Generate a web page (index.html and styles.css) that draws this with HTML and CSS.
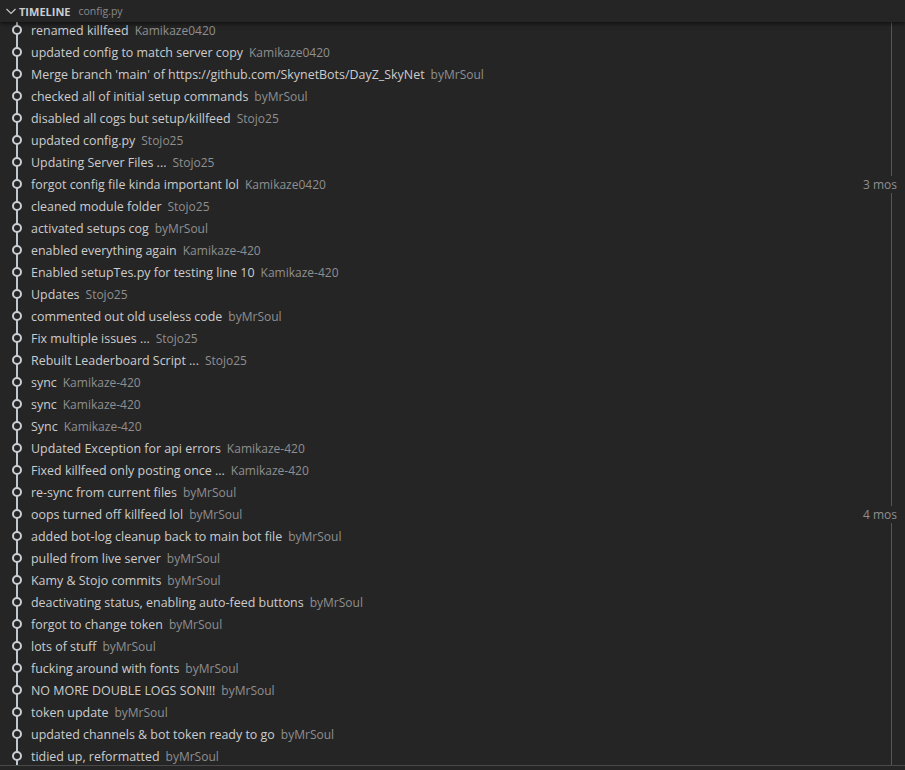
FILE: index.html
```html
<!DOCTYPE html>
<html>
<head>
<meta charset="utf-8">
<link rel="stylesheet" href="styles.css">
</head>
<body>
<div class="pane">
  <div class="header">
    <svg class="chev" width="16" height="16" viewBox="0 0 16 16"><path d="M3.5 6 L8 10.5 L12.5 6" fill="none" stroke="#c5c5c5" stroke-width="1.2"/></svg>
    <span class="title">TIMELINE</span>
    <span class="file">config.py</span>
  </div>
  <div class="viewport">
    <div class="vline"></div>
    <div class="list" id="list">
      <div class="row"><span class="ic"></span><span class="label">renamed killfeed</span><span class="desc">Kamikaze0420</span></div>
      <div class="row"><span class="ic"></span><span class="label">updated config to match server copy</span><span class="desc">Kamikaze0420</span></div>
      <div class="row"><span class="ic"></span><span class="label">Merge branch 'main' of https://github.com/SkynetBots/DayZ_SkyNet</span><span class="desc">byMrSoul</span></div>
      <div class="row"><span class="ic"></span><span class="label">checked all of initial setup commands</span><span class="desc">byMrSoul</span></div>
      <div class="row"><span class="ic"></span><span class="label">disabled all cogs but setup/killfeed</span><span class="desc">Stojo25</span></div>
      <div class="row"><span class="ic"></span><span class="label">updated config.py</span><span class="desc">Stojo25</span></div>
      <div class="row"><span class="ic"></span><span class="label">Updating Server Files ...</span><span class="desc">Stojo25</span></div>
      <div class="row"><span class="ic"></span><span class="label">forgot config file kinda important lol</span><span class="desc">Kamikaze0420</span><span class="time">3 mos</span></div>
      <div class="row"><span class="ic"></span><span class="label">cleaned module folder</span><span class="desc">Stojo25</span></div>
      <div class="row"><span class="ic"></span><span class="label">activated setups cog</span><span class="desc">byMrSoul</span></div>
      <div class="row"><span class="ic"></span><span class="label">enabled everything again</span><span class="desc">Kamikaze-420</span></div>
      <div class="row"><span class="ic"></span><span class="label">Enabled setupTes.py for testing line 10</span><span class="desc">Kamikaze-420</span></div>
      <div class="row"><span class="ic"></span><span class="label">Updates</span><span class="desc">Stojo25</span></div>
      <div class="row"><span class="ic"></span><span class="label">commented out old useless code</span><span class="desc">byMrSoul</span></div>
      <div class="row"><span class="ic"></span><span class="label">Fix multiple issues ...</span><span class="desc">Stojo25</span></div>
      <div class="row"><span class="ic"></span><span class="label">Rebuilt Leaderboard Script ...</span><span class="desc">Stojo25</span></div>
      <div class="row"><span class="ic"></span><span class="label">sync</span><span class="desc">Kamikaze-420</span></div>
      <div class="row"><span class="ic"></span><span class="label">sync</span><span class="desc">Kamikaze-420</span></div>
      <div class="row"><span class="ic"></span><span class="label">Sync</span><span class="desc">Kamikaze-420</span></div>
      <div class="row"><span class="ic"></span><span class="label">Updated Exception for api errors</span><span class="desc">Kamikaze-420</span></div>
      <div class="row"><span class="ic"></span><span class="label">Fixed killfeed only posting once ...</span><span class="desc">Kamikaze-420</span></div>
      <div class="row"><span class="ic"></span><span class="label">re-sync from current files</span><span class="desc">byMrSoul</span></div>
      <div class="row"><span class="ic"></span><span class="label">oops turned off killfeed lol</span><span class="desc">byMrSoul</span><span class="time">4 mos</span></div>
      <div class="row"><span class="ic"></span><span class="label">added bot-log cleanup back to main bot file</span><span class="desc">byMrSoul</span></div>
      <div class="row"><span class="ic"></span><span class="label">pulled from live server</span><span class="desc">byMrSoul</span></div>
      <div class="row"><span class="ic"></span><span class="label">Kamy &amp; Stojo commits</span><span class="desc">byMrSoul</span></div>
      <div class="row"><span class="ic"></span><span class="label">deactivating status, enabling auto-feed buttons</span><span class="desc">byMrSoul</span></div>
      <div class="row"><span class="ic"></span><span class="label">forgot to change token</span><span class="desc">byMrSoul</span></div>
      <div class="row"><span class="ic"></span><span class="label">lots of stuff</span><span class="desc">byMrSoul</span></div>
      <div class="row"><span class="ic"></span><span class="label">fucking around with fonts</span><span class="desc">byMrSoul</span></div>
      <div class="row"><span class="ic"></span><span class="label">NO MORE DOUBLE LOGS SON!!!</span><span class="desc">byMrSoul</span></div>
      <div class="row"><span class="ic"></span><span class="label">token update</span><span class="desc">byMrSoul</span></div>
      <div class="row"><span class="ic"></span><span class="label">updated channels &amp; bot token ready to go</span><span class="desc">byMrSoul</span></div>
      <div class="row"><span class="ic"></span><span class="label">tidied up, reformatted</span><span class="desc">byMrSoul</span></div>
    </div>
  </div>
</div>
</body>
</html>
```
FILE: styles.css
```css
html, body {
  margin: 0;
  padding: 0;
  background: #252526;
  height: 770px;
  overflow: hidden;
}
.pane {
  font-family: "Segoe UI", "Open Sans", sans-serif;
  color: #cccccc;
  width: 905px;
  height: 770px;
  display: flex;
  flex-direction: column;
}
.header {
  height: 22px;
  flex: none;
  display: flex;
  align-items: center;
  position: relative;
  z-index: 2;
  background: #252526;
  box-shadow: 0 2px 4px rgba(0,0,0,0.55);
}
.chev {
  margin-left: 3px;
  flex: none;
}
.title {
  font-size: 11px;
  font-weight: 700;
  color: #cccccc;
}
.file {
  font-size: 10.5px;
  color: #8a8a8a;
  margin-left: 8px;
}
.viewport {
  height: 743px;
  flex: none;
  overflow: hidden;
  position: relative;
  border-bottom: 1px solid #4a4a4a;
}
.vline {
  position: absolute;
  left: 891px;
  top: 0;
  bottom: 0;
  width: 1px;
  background: #555555;
  z-index: 0;
}
.list {
  margin-top: -3px;
  position: relative;
  z-index: 1;
}
.row {
  height: 22px;
  display: flex;
  align-items: center;
  font-size: 12.45px;
  white-space: nowrap;
}
.ic {
  flex: none;
  width: 10px;
  height: 22px;
  margin-left: 12px;
  margin-right: 9px;
  position: relative;
}
.ic::before {
  content: "";
  position: absolute;
  left: 4px;
  top: 0;
  bottom: 0;
  width: 2px;
  background: #bfc8cf;
}
.ic::after {
  content: "";
  position: absolute;
  left: 0;
  top: 6px;
  width: 6px;
  height: 6px;
  border: 2px solid #c9cfd4;
  border-radius: 50%;
  background: #252526;
}
.label {
  color: #cccccc;
}
.desc {
  color: #8f8f8f;
  font-size: 12px;
  margin-left: 6px;
}
.time {
  margin-left: auto;
  color: #8f8f8f;
  font-size: 12px;
  background: #252526;
  padding: 0 8px 0 6px;
}
```
